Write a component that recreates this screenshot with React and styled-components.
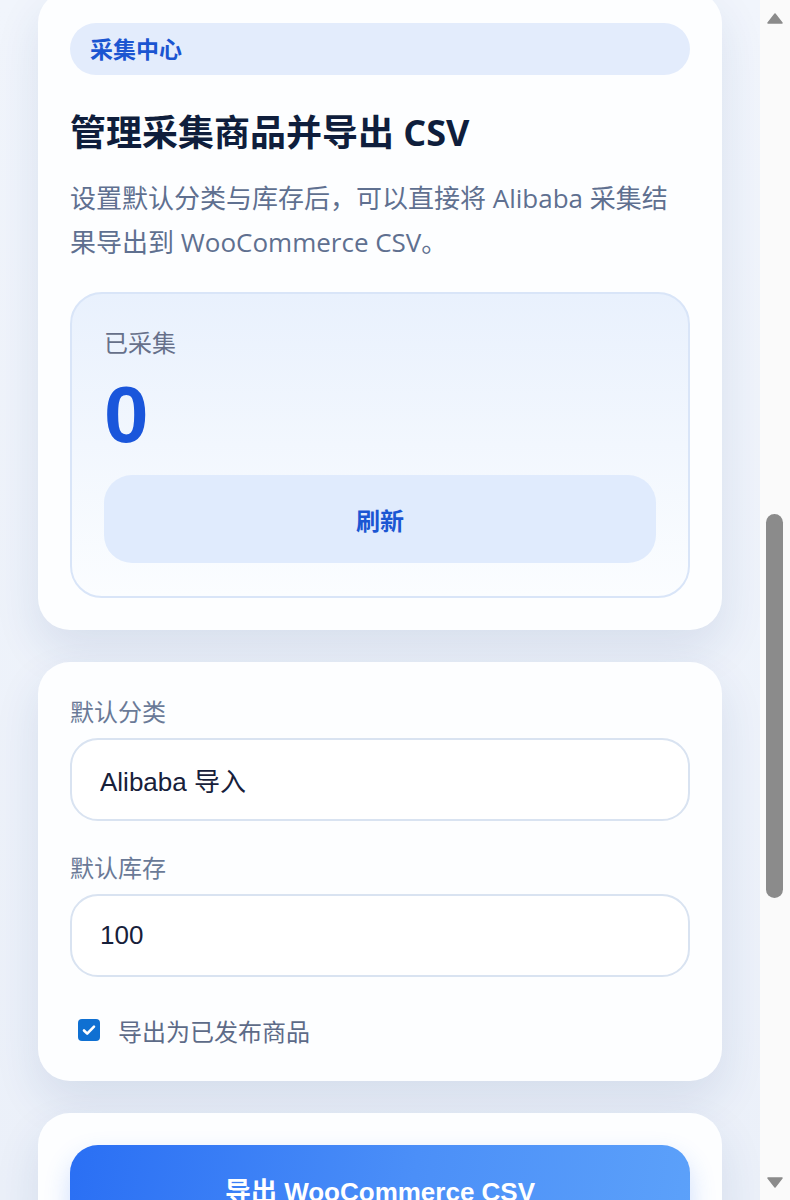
import React, { useLayoutEffect, useRef, useState } from 'react';
import styled, { createGlobalStyle } from 'styled-components';

const GlobalStyle = createGlobalStyle`
  html, body {
    margin: 0;
    padding: 0;
    overflow: hidden;
  }

  body {
    font-family: "Open Sans", "Noto Sans CJK SC", sans-serif;
    color: #14203a;
  }
`;

const BAR = 30;

const Viewport = styled.div`
  height: 100vh;
  overflow-y: auto;
  background: linear-gradient(180deg, #f1f5fc 0%, #ebf0f9 100%);

  &::-webkit-scrollbar {
    width: ${BAR}px;
  }
  &::-webkit-scrollbar-track {
    background: #fafafa;
  }
  &::-webkit-scrollbar-thumb {
    background: #8b8b8b;
    background-clip: padding-box;
    border-left: 6px solid transparent;
    border-right: 7px solid transparent;
    border-radius: 14px;
  }
`;

const FakeBar = styled.div`
  position: fixed;
  top: 0;
  right: 0;
  width: ${BAR}px;
  height: 100vh;
  background: #fafafa;
`;

const Arrow = styled.svg`
  position: absolute;
  left: 7px;
  ${(p) => (p.$down ? 'bottom: 12px;' : 'top: 13px;')}
`;

const Thumb = styled.div`
  position: absolute;
  left: 6px;
  width: 17px;
  border-radius: 9px;
  background: #8b8b8b;
`;

const Page = styled.div`
  box-sizing: border-box;
  min-height: 3562px;
  padding: 0 ${(p) => 38 + p.$gutter}px 40px 38px;
  display: flex;
  flex-direction: column;
  gap: 32px;
`;

const Intro = styled.div`
  min-height: 1470px;
  display: flex;
  flex-direction: column;
  gap: 32px;
`;

const Card = styled.section`
  box-sizing: border-box;
  background: #fdfeff;
  border-radius: 32px;
  padding: 32px 32px ${(p) => p.$bottom || 32}px;
  box-shadow: 0 20px 46px rgba(28, 62, 130, 0.11);
`;

const Brand = styled.div`
  display: flex;
  align-items: center;
  gap: 18px;
`;

const BrandName = styled.div`
  font-size: 28px;
  font-weight: 700;
  line-height: 40px;
  color: #0f1e3c;
`;

const BrandSub = styled.div`
  font-size: 22px;
  line-height: 32px;
  color: #6a7a97;
`;

const Badge = styled.div`
  height: 52px;
  line-height: 52px;
  padding: 0 20px;
  border-radius: 26px;
  background: #e3ecfc;
  color: #1b55d1;
  font-size: 23px;
  font-weight: 700;
`;

const Title = styled.h1`
  margin: 34px 0 0;
  font-size: 36px;
  line-height: 47px;
  font-weight: 700;
  color: #0f1e3c;
`;

const Desc = styled.p`
  margin: 20px 0 0;
  padding-right: 10px;
  font-size: 26px;
  line-height: 44px;
  color: #5f7090;
`;

const Steps = styled.ol`
  margin: 24px 0 0;
  padding: 0 0 0 34px;
  font-size: 24px;
  line-height: 44px;
  color: #5f7090;
`;

const StatBox = styled.div`
  margin-top: 28px;
  border: 2px solid #d9e5f8;
  border-radius: 32px;
  padding: 31px 32px 33px;
  background: linear-gradient(180deg, #e9f1fd 0%, #fbfdff 100%);
`;

const StatLabel = styled.div`
  font-size: 24px;
  line-height: 36px;
  color: #66708a;
`;

const StatValue = styled.div`
  margin-top: 10px;
  font-family: "Liberation Sans", "Noto Sans CJK SC", sans-serif;
  font-size: 80px;
  font-weight: 700;
  line-height: 88px;
  color: #1a56db;
`;

const SoftButton = styled.button`
  display: block;
  width: 100%;
  height: 88px;
  margin-top: 16px;
  border: none;
  border-radius: 28px;
  background: #e0ebfd;
  color: #1b56d3;
  font-family: "Liberation Sans", "Noto Sans CJK SC", sans-serif;
  font-size: 24px;
  font-weight: 700;
  cursor: pointer;
`;

const PrimaryButton = styled.button`
  display: block;
  width: 100%;
  height: 88px;
  margin-top: ${(p) => p.$top || 0}px;
  border: none;
  border-radius: 28px;
  background: linear-gradient(100deg, #2a6ff4 0%, #4b8ff8 55%, #5ca1fa 100%);
  color: #ffffff;
  font-family: "Liberation Sans", "Noto Sans CJK SC", sans-serif;
  font-size: 26px;
  font-weight: 700;
  box-shadow: 0 12px 26px rgba(42, 111, 244, 0.22);
  cursor: pointer;
`;

const Field = styled.label`
  display: flex;
  flex-direction: column;
  gap: 8px;
  & + & {
    margin-top: 29px;
  }
`;

const FieldLabel = styled.span`
  font-size: 24px;
  line-height: 36px;
  color: #6a7a97;
`;

const TextInput = styled.input`
  box-sizing: border-box;
  width: 100%;
  height: 83px;
  padding: 0 28px;
  border: 2px solid #d9e3f1;
  border-radius: 28px;
  background: #ffffff;
  color: #17203a;
  font-family: "Liberation Sans", "Noto Sans CJK SC", sans-serif;
  font-size: 26px;
  outline: none;
`;

const CheckRow = styled.label`
  display: flex;
  align-items: center;
  gap: 18px;
  margin-top: 35px;
  padding-left: 8px;
  height: 36px;
  font-size: 24px;
  color: #5d6b88;
  cursor: pointer;
`;

const HiddenCheck = styled.input`
  position: absolute;
  opacity: 0;
  width: 0;
  height: 0;
`;

const CheckBox = styled.span`
  display: flex;
  align-items: center;
  justify-content: center;
  width: 22px;
  height: 22px;
  border-radius: 4px;
  background: ${(p) => (p.$checked ? '#0f70d2' : '#ffffff')};
  border: ${(p) => (p.$checked ? 'none' : '2px solid #8a94a6')};
`;

const Logo = () => (
  <svg width="56" height="56" viewBox="0 0 56 56">
    <rect width="56" height="56" rx="16" fill="#2a6ff4" />
    <path d="M16 20l6 18 6-14 6 14 6-18" fill="none" stroke="#fff" strokeWidth="4" strokeLinecap="round" strokeLinejoin="round" />
  </svg>
);

const ArrowIcon = ({ down }) => (
  <Arrow $down={down} width="16" height="11" viewBox="0 0 16 11">
    <path
      d={down ? 'M1 1h14L8 10z' : 'M1 10h14L8 1z'}
      fill="#8b8b8b"
      stroke="#8b8b8b"
      strokeWidth="1.5"
      strokeLinejoin="round"
    />
  </Arrow>
);

const App = () => {
  const viewRef = useRef(null);
  const firstRef = useRef(null);
  const [published, setPublished] = useState(true);
  const [bar, setBar] = useState(null);

  useLayoutEffect(() => {
    const view = viewRef.current;
    const first = firstRef.current;
    if (!view || !first) return;
    const native = view.offsetWidth - view.clientWidth;
    const top =
      first.getBoundingClientRect().top -
      view.getBoundingClientRect().top +
      view.scrollTop;
    view.scrollTop = top + 9;
    if (native === 0) {
      const track = view.clientHeight - BAR * 2;
      const length = (track * view.clientHeight) / view.scrollHeight;
      const range = view.scrollHeight - view.clientHeight;
      const offset = BAR + (view.scrollTop / range) * (track - length);
      setBar({ top: offset, height: length });
    }
  }, [bar === null]);

  const gutter = bar ? BAR : 0;

  return (
    <>
      <GlobalStyle />
      <Viewport ref={viewRef}>
        <Page $gutter={gutter}>
          <Intro>
            <Card>
              <Brand>
                <Logo />
                <div>
                  <BrandName>Alibaba 采集助手</BrandName>
                  <BrandSub>WooCommerce 商品导出工具</BrandSub>
                </div>
              </Brand>
            </Card>

            <Card>
              <Badge>当前页面</Badge>
              <Title>采集 Alibaba 商品</Title>
              <Desc>
                打开 Alibaba 商品详情页后点击下方按钮，插件会读取标题、价格、主图与规格信息。
              </Desc>
              <PrimaryButton $top={28}>采集当前商品</PrimaryButton>
            </Card>

            <Card>
              <Badge>使用步骤</Badge>
              <Steps>
                <li>在 Alibaba 打开商品详情页</li>
                <li>点击“采集当前商品”保存数据</li>
                <li>设置默认分类、库存与发布状态</li>
                <li>导出 CSV 并在 WooCommerce 中导入</li>
              </Steps>
            </Card>
          </Intro>

          <Card ref={firstRef}>
            <Badge>采集中心</Badge>
            <Title>管理采集商品并导出 CSV</Title>
            <Desc>
              设置默认分类与库存后，可以直接将 Alibaba 采集结果导出到 WooCommerce CSV。
            </Desc>
            <StatBox>
              <StatLabel>已采集</StatLabel>
              <StatValue>0</StatValue>
              <SoftButton type="button">刷新</SoftButton>
            </StatBox>
          </Card>

          <Card $bottom={33}>
            <Field>
              <FieldLabel>默认分类</FieldLabel>
              <TextInput type="text" defaultValue="Alibaba 导入" />
            </Field>
            <Field>
              <FieldLabel>默认库存</FieldLabel>
              <TextInput type="number" defaultValue="100" />
            </Field>
            <CheckRow>
              <HiddenCheck
                type="checkbox"
                checked={published}
                onChange={(e) => setPublished(e.target.checked)}
              />
              <CheckBox $checked={published}>
                {published && (
                  <svg width="16" height="16" viewBox="0 0 16 16">
                    <path d="M3 8.5l3.2 3.2L13 4.6" fill="none" stroke="#fff" strokeWidth="2.6" strokeLinecap="round" strokeLinejoin="round" />
                  </svg>
                )}
              </CheckBox>
              导出为已发布商品
            </CheckRow>
          </Card>

          <Card>
            <PrimaryButton type="button">导出 WooCommerce CSV</PrimaryButton>
            <Desc>导出的文件可在 WooCommerce 后台「商品 → 导入」中直接上传。</Desc>
          </Card>
        </Page>
      </Viewport>

      {bar && (
        <FakeBar aria-hidden="true">
          <ArrowIcon />
          <Thumb style={{ top: bar.top, height: bar.height }} />
          <ArrowIcon down />
        </FakeBar>
      )}
    </>
  );
};

export default App;
